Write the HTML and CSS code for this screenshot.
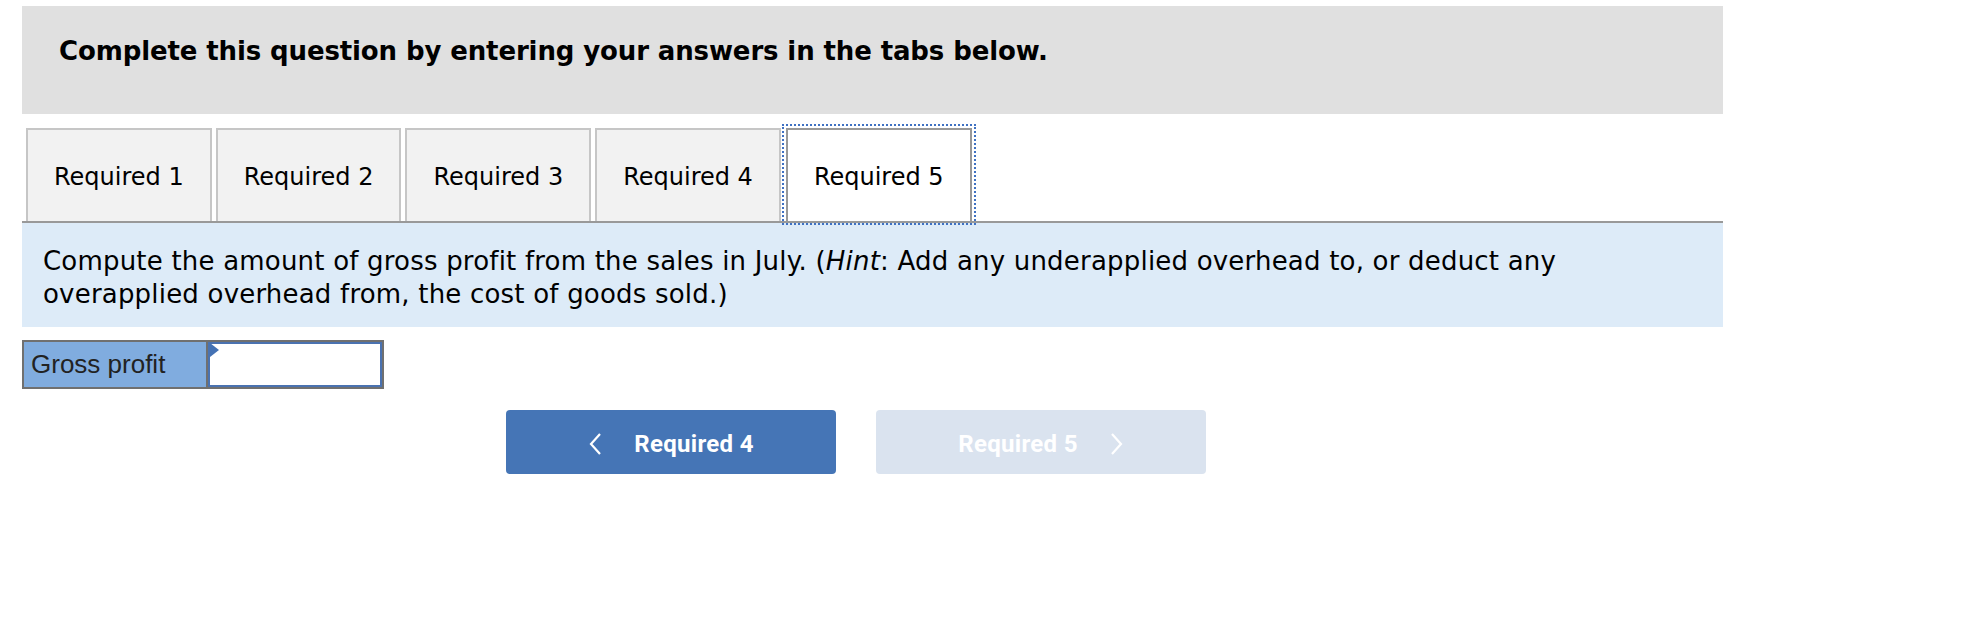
FILE: index.html
```html
<!DOCTYPE html>
<html>
<head>
<meta charset="utf-8">
<link rel="stylesheet" href="styles.css">
</head>
<body>
<div class="page">
  <div class="banner">Complete this question by entering your answers in the tabs below.</div>
  <div class="tabs">
    <div class="tab">Required 1</div>
    <div class="tab">Required 2</div>
    <div class="tab">Required 3</div>
    <div class="tab">Required 4</div>
    <div class="tab tab-active">Required 5</div>
  </div>
  <div class="prompt">Compute the amount of gross profit from the sales in July. (<i>Hint</i>: Add any underapplied overhead to, or deduct any overapplied overhead from, the cost of goods sold.)</div>
  <div class="answer">
    <div class="answer-label">Gross profit</div>
    <div class="answer-input"></div>
  </div>
  <div class="nav">
    <div class="nav-btn nav-prev">
      <svg class="chev" width="14" height="24" viewBox="0 0 14 24"><polyline points="12,2 3,12 12,22" fill="none" stroke="#fff" stroke-width="2.2"/></svg>
      <span>Required 4</span>
    </div>
    <div class="nav-btn nav-next">
      <span>Required 5</span>
      <svg class="chev" width="14" height="24" viewBox="0 0 14 24"><polyline points="2,2 11,12 2,22" fill="none" stroke="#fff" stroke-width="2.2"/></svg>
    </div>
  </div>
</div>
</body>
</html>
```
FILE: styles.css
```css
html, body {
  margin: 0;
  padding: 0;
  background: #fff;
}

.page {
  width: 1701px;
  padding: 6px 0 0 22px;
  font-family: "DejaVu Sans", Verdana, sans-serif;
  color: #000;
}

.banner {
  box-sizing: border-box;
  height: 108px;
  background: #e0e0e0;
  padding: 30px 37px 0;
  font-size: 26px;
  font-weight: bold;
  letter-spacing: -0.12px;
  line-height: 30px;
}

.tabs {
  display: flex;
  gap: 4px;
  margin-top: 14px;
  padding-left: 4px;
  border-bottom: 2px solid #999;
}

.tab {
  box-sizing: border-box;
  height: 93px;
  display: flex;
  align-items: center;
  padding: 3px 26px 0;
  background: #f2f2f2;
  border: 2px solid #c6c6c6;
  border-bottom: none;
  font-size: 24px;
}

.tab-active {
  margin-left: 1px;
  background: #fff;
  border-color: #999;
  outline: 2px dotted #3f71c2;
  outline-offset: 2px;
  position: relative;
  z-index: 1;
}

.prompt {
  box-sizing: border-box;
  height: 104px;
  background: #ddebf8;
  padding: 22px 150px 0 21px;
  font-size: 26px;
  letter-spacing: 0.2px;
  line-height: 33px;
}

.answer {
  box-sizing: border-box;
  display: flex;
  width: 362px;
  height: 49px;
  margin-top: 13px;
  border: 2px solid #707070;
  font-family: "Liberation Sans", Arial, sans-serif;
}

.answer-label {
  width: 184px;
  display: flex;
  align-items: center;
  padding-left: 7px;
  box-sizing: border-box;
  background: #80acdf;
  border-right: 2px solid #707070;
  font-size: 26px;
  color: #222;
}

.answer-input {
  flex: 1;
  position: relative;
  background: #fff;
  border: 2px solid #4a72b0;
}

.answer-input::before {
  content: "";
  position: absolute;
  left: 0;
  top: -1px;
  border-left: 9px solid #4472b4;
  border-top: 7px solid transparent;
  border-bottom: 7px solid transparent;
}

.nav {
  display: flex;
  gap: 40px;
  margin-top: 21px;
  padding-left: 484px;
}

.nav-btn {
  box-sizing: border-box;
  width: 330px;
  height: 64px;
  padding-top: 3px;
  border-radius: 4px;
  display: flex;
  align-items: center;
  justify-content: center;
  gap: 32px;
  font-family: Roboto, "Liberation Sans", sans-serif;
  font-weight: bold;
  font-size: 24px;
  letter-spacing: 0.3px;
  color: #fff;
}

.nav-prev {
  background: #4575b6;
}

.nav-next {
  background: #dae3ef;
}

.chev {
  display: block;
}
```
